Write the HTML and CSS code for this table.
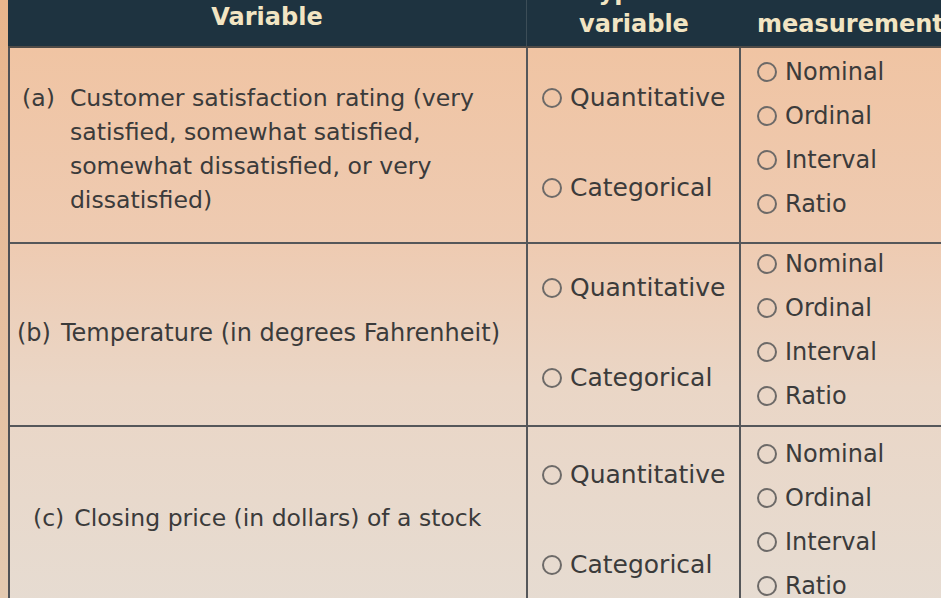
FILE: index.html
```html
<!DOCTYPE html>
<html>
<head>
<meta charset="utf-8">
<link rel="stylesheet" href="styles.css">
</head>
<body>
<div class="table">
  <div class="head">
    <div class="hcell hc1"><span>Variable</span></div>
    <div class="hcell hc2"><span>Type of</span><span>variable</span></div>
    <div class="hcell hc3"><span>Level of</span><span>measurement</span></div>
  </div>
  <div class="body">
    <div class="row row-a">
      <div class="cell var">
        <span class="lbl">(a)</span>
        <span class="desc">Customer satisfaction rating (very satisfied, somewhat satisfied, somewhat dissatisfied, or very dissatisfied)</span>
      </div>
      <div class="cell type">
        <label class="opt"><span class="radio"></span>Quantitative</label>
        <label class="opt"><span class="radio"></span>Categorical</label>
      </div>
      <div class="cell level">
        <label class="opt"><span class="radio"></span>Nominal</label>
        <label class="opt"><span class="radio"></span>Ordinal</label>
        <label class="opt"><span class="radio"></span>Interval</label>
        <label class="opt"><span class="radio"></span>Ratio</label>
      </div>
    </div>
    <div class="row row-b">
      <div class="cell var">
        <span class="lbl">(b)</span>
        <span class="desc">Temperature (in degrees Fahrenheit)</span>
      </div>
      <div class="cell type">
        <label class="opt"><span class="radio"></span>Quantitative</label>
        <label class="opt"><span class="radio"></span>Categorical</label>
      </div>
      <div class="cell level">
        <label class="opt"><span class="radio"></span>Nominal</label>
        <label class="opt"><span class="radio"></span>Ordinal</label>
        <label class="opt"><span class="radio"></span>Interval</label>
        <label class="opt"><span class="radio"></span>Ratio</label>
      </div>
    </div>
    <div class="row row-c">
      <div class="cell var">
        <span class="lbl">(c)</span>
        <span class="desc">Closing price (in dollars) of a stock</span>
      </div>
      <div class="cell type">
        <label class="opt"><span class="radio"></span>Quantitative</label>
        <label class="opt"><span class="radio"></span>Categorical</label>
      </div>
      <div class="cell level">
        <label class="opt"><span class="radio"></span>Nominal</label>
        <label class="opt"><span class="radio"></span>Ordinal</label>
        <label class="opt"><span class="radio"></span>Interval</label>
        <label class="opt"><span class="radio"></span>Ratio</label>
      </div>
    </div>
  </div>
</div>
</body>
</html>
```
FILE: styles.css
```css
html, body {
  margin: 0;
  padding: 0;
  width: 941px;
  height: 598px;
  overflow: hidden;
}
body {
  background: linear-gradient(to bottom, #e9b58c, #e3c9b0);
  font-family: "DejaVu Sans", Verdana, sans-serif;
  color: #3b3b3b;
}
.table {
  margin-left: 8px;
  width: 1000px;
}
.head {
  display: grid;
  grid-template-columns: 518px 215px 267px;
  grid-template-rows: 46px;
  height: 46px;
  background: #1e3340;
  border-bottom: 2px solid #4f4b47;
  overflow: hidden;
}
.hcell {
  display: flex;
  flex-direction: column;
  justify-content: flex-end;
  align-items: center;
  height: 46px;
  color: #f2e5c3;
  font-weight: bold;
  font-size: 24px;
  line-height: 32px;
  padding-bottom: 6px;
  box-sizing: border-box;
  white-space: nowrap;
}
.hc1 {
  padding-bottom: 13px;
}
.hc2 {
  border-left: 1px solid #3c4d57;
}
.hc3 {
  align-items: flex-start;
  padding-left: 16px;
}
.body {
  background: linear-gradient(to bottom, #f0c4a3 0%, #eecbb2 35%, #ead6c6 60%, #e6dcd2 100%);
  border-left: 2px solid #4f5155;
}
.row {
  display: grid;
  grid-template-columns: 516px 215px 267px;
  border-bottom: 2px solid #55575a;
}
.row-a { height: 194px; }
.row-b { height: 181px; }
.row-c { height: 186px; border-bottom: none; }
.cell {
  display: flex;
  box-sizing: border-box;
}
.var {
  align-items: center;
  font-size: 24px;
  line-height: 34px;
  white-space: nowrap;
}
.row-a .var {
  align-items: flex-start;
  padding-top: 33px;
  padding-left: 12px;
  font-size: 23.6px;
  white-space: normal;
}
.row-b .var {
  padding-left: 7px;
  padding-bottom: 4px;
}
.row-c .var {
  padding-left: 23px;
  padding-bottom: 4px;
  font-size: 23.5px;
}
.lbl {
  flex: 0 0 auto;
  margin-right: 15px;
}
.row-b .lbl, .row-c .lbl {
  margin-right: 10px;
}
.desc {
  flex: 1;
}
.row-a .desc {
  padding-right: 30px;
}
.type {
  flex-direction: column;
  justify-content: center;
  gap: 58px;
  padding-left: 14px;
  border-left: 2px solid #55575a;
  border-right: 2px solid #55575a;
}
.row-a .type { padding-bottom: 4px; }
.row-b .type { padding-bottom: 4px; }
.level {
  flex-direction: column;
  justify-content: center;
  gap: 12px;
  padding-left: 16px;
}
.opt {
  display: flex;
  align-items: center;
  font-size: 24px;
  line-height: 32px;
  white-space: nowrap;
}
.type .opt {
  font-size: 25px;
}
.radio {
  width: 16px;
  height: 16px;
  border: 2px solid #6d6a68;
  border-radius: 50%;
  margin-right: 8px;
  flex: 0 0 auto;
}
.row-a .level { padding-bottom: 14px; }
.row-b .level { padding-bottom: 10px; }
```
